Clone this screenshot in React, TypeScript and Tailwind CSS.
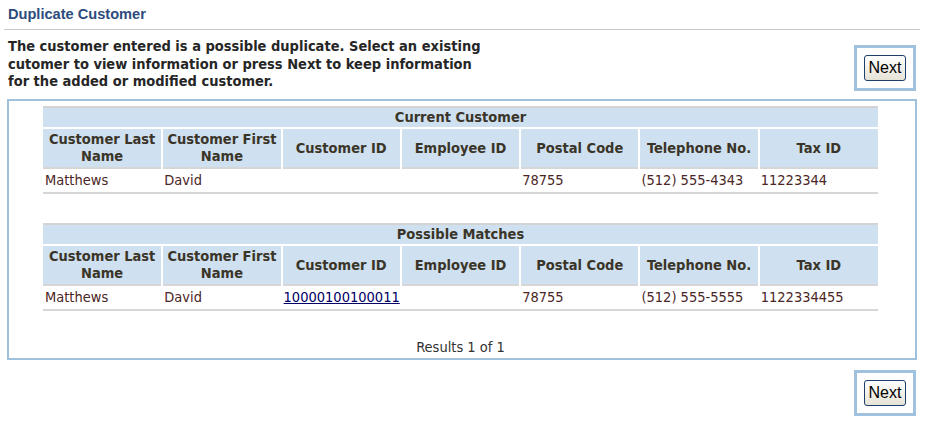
import React from "react";

const COLUMNS = [
  ["Customer Last", "Name"],
  ["Customer First", "Name"],
  ["Customer ID"],
  ["Employee ID"],
  ["Postal Code"],
  ["Telephone No."],
  ["Tax ID"],
];

type Row = {
  last: string;
  first: string;
  customerId: string;
  link?: boolean;
  employeeId: string;
  postal: string;
  phone: string;
  taxId: string;
};

const CURRENT: Row = {
  last: "Matthews",
  first: "David",
  customerId: "",
  employeeId: "",
  postal: "78755",
  phone: "(512) 555-4343",
  taxId: "11223344",
};

const MATCH: Row = {
  last: "Matthews",
  first: "David",
  customerId: "10000100100011",
  link: true,
  employeeId: "",
  postal: "78755",
  phone: "(512) 555-5555",
  taxId: "1122334455",
};

const FONT = "font-['DejaVu_Sans_Condensed','DejaVu_Sans',sans-serif]";

function NextBox() {
  return (
    <div className="w-[62px] h-[46px] border-[3px] border-[#a0c2de] flex items-center justify-center">
      <button
        type="button"
        className="w-[42px] h-[26px] rounded-[3px] border border-[#1c3f6e] bg-gradient-to-b from-white to-[#e6e3d6] text-[16px] text-black font-['Liberation_Sans',Arial,sans-serif] leading-none"
      >
        Next
      </button>
    </div>
  );
}

function CustomerTable({ title, row }: { title: string; row: Row }) {
  const cells = [row.last, row.first, row.customerId, row.employeeId, row.postal, row.phone, row.taxId];
  return (
    <table className="w-[835px] table-fixed border-collapse text-[14.5px]">
      <tbody>
        <tr>
          <td
            colSpan={7}
            className="h-[21px] p-0 border-t-2 border-[#d3d3d3] bg-[#cfe0f0] text-center font-bold text-[#3a3528] leading-none"
          >
            {title}
          </td>
        </tr>
        <tr>
          {COLUMNS.map((lines, i) => (
            <th
              key={i}
              className={`h-[40px] p-0 border-t-2 border-white bg-[#cfe0f0] text-center font-bold text-[#3a3528] leading-[17px] align-middle ${
                i > 0 ? "border-l-2" : ""
              }`}
            >
              {lines.map((l, j) => (
                <div key={j}>{l}</div>
              ))}
            </th>
          ))}
        </tr>
        <tr>
          {cells.map((c, i) => (
            <td
              key={i}
              className="h-[25px] py-0 border-t-2 border-b-2 border-[#d6d6d6] px-[2px] text-left text-[#4a2626] leading-none"
            >
              {i === 2 && row.link ? (
                <a href="#" className="text-[#000066] underline">
                  {c}
                </a>
              ) : (
                c
              )}
            </td>
          ))}
        </tr>
      </tbody>
    </table>
  );
}

export default function App() {
  return (
    <div className={`w-[925px] h-[423px] bg-white ${FONT} text-[#333]`}>
      <div className="px-[4px] pt-[5px]">
        <div className="pl-[4px] h-[24px] text-[14.6px] font-bold text-[#2d4b7d] font-['Liberation_Sans',Arial,sans-serif] leading-[18px]">
          Duplicate Customer
        </div>
        <div className="w-[916px] border-b border-[#c8c8c8]" />
      </div>

      <div className="flex justify-between pl-[8px] pr-[9px] pt-[8px]">
        <p className="text-[14.5px] font-bold leading-[17.5px] text-[#262626]">
          The customer entered is a possible duplicate. Select an existing
          <br />
          cutomer to view information or press Next to keep information
          <br />
          for the added or modified customer.
        </p>
        <div className="mt-[7px]">
          <NextBox />
        </div>
      </div>

      <div className="mx-[7px] mt-[8px] w-[910px] h-[261px] border-2 border-[#9fc1dc] pl-[34px] pt-[5px]">
        <CustomerTable title="Current Customer" row={CURRENT} />
        <div className="h-[29px]" />
        <CustomerTable title="Possible Matches" row={MATCH} />
        <div className="w-[835px] pt-[27px] text-center text-[14.5px] leading-[18px] text-[#333]">Results 1 of 1</div>
      </div>

      <div className="flex justify-end pr-[9px] pt-[10px]">
        <NextBox />
      </div>
    </div>
  );
}
